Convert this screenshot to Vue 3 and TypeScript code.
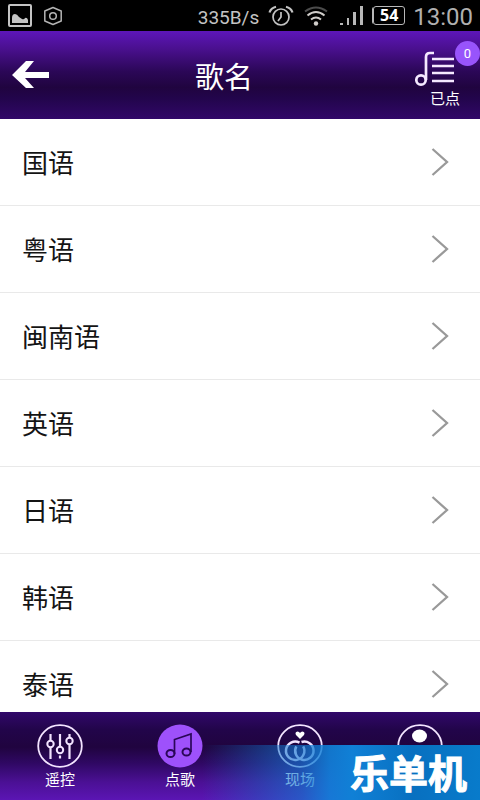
<script setup lang="ts">
import { ref } from 'vue'

interface Language {
  id: string
  name: string
}

const languages: Language[] = [
  { id: 'mandarin', name: '国语' },
  { id: 'cantonese', name: '粤语' },
  { id: 'hokkien', name: '闽南语' },
  { id: 'english', name: '英语' },
  { id: 'japanese', name: '日语' },
  { id: 'korean', name: '韩语' },
  { id: 'thai', name: '泰语' },
]

const queued = ref<number>(0)
</script>

<template>
  <div class="screen">
    <div class="status">
      <svg class="picture" width="24" height="24" viewBox="0 0 24 24">
        <rect x="1" y="1" width="22" height="21" rx="1" fill="none" stroke="#c4c4c4" stroke-width="2" />
        <path d="M4 19v-5q0-4 3-4 2 0 4 3l3 2q2 1 3-1 2-1 3 2v3z" fill="#c4c4c4" />
      </svg>
      <svg class="hexagon" width="20" height="20" viewBox="0 0 20 20" fill="none" stroke="#b4b4b4" stroke-width="1.500">
        <path d="M10 1.500L18.200 5v10L10 18.500 1.800 15V5z" stroke-linejoin="round" />
        <circle cx="10" cy="10" r="3.300" />
      </svg>
      <span class="speed">335B/s</span>
      <svg class="alarm" width="26" height="22" viewBox="0 0 26 22" fill="none" stroke="#c4c4c4" stroke-width="1.700">
        <circle cx="13" cy="12" r="8" />
        <path d="M13 7v5l-3 4" />
        <path d="M1.500 7.500Q3 3 8 1.800M24.500 7.500Q23 3 18 1.800" stroke-width="2.200" />
      </svg>
      <svg class="wifi" width="26" height="22" viewBox="0 0 26 22" fill="none" stroke="#d0cdca" stroke-width="2">
        <path d="M2 6.500Q13-1.500 24 6.500" stroke="#4c4c4c" />
        <path d="M4.500 10.500q8.500-7 17 0M8 14.500q5-4 10 0" />
        <circle cx="13" cy="18.500" r="2.200" fill="#d0cdca" stroke="none" />
      </svg>
      <svg class="signal" width="24" height="20" viewBox="0 0 24 20" fill="#b8b8b8">
        <path d="M0 17h3v2H0zM7 12h2v7H7zM13 6h3v13h-3zM20 0h3v19h-3z" />
      </svg>
      <span class="battery">54</span>
      <span class="clock">13:00</span>
    </div>

    <header class="header">
      <button class="back" type="button" aria-label="返回">
        <svg width="38" height="30" viewBox="0 0 38 30" fill="#fff">
          <path d="M0 15L14 1h8L13 12h24v6H13l9 10h-8z" />
        </svg>
      </button>
      <h1>歌名</h1>
      <button class="queue" type="button">
        <svg width="40" height="36" viewBox="0 0 40 36" fill="none" stroke="#f5e9ff">
          <circle cx="6" cy="29" r="4.700" stroke-width="2.700" />
          <path d="M11 29V6q0-4 4-4h4" stroke-width="2.700" />
          <path d="M17 8h22M17 15h22M17 22h22M17 30h22" stroke-width="2.300" />
        </svg>
        <span class="queue-label">已点</span>
        <span class="badge">{{ queued }}</span>
      </button>
    </header>

    <main class="list">
      <button v-for="item in languages" :key="item.id" class="row" type="button">
        <span>{{ item.name }}</span>
        <svg width="18" height="28" viewBox="0 0 18 28" fill="none" stroke="#999" stroke-width="2.300">
          <path d="M1.500 1L16 14 1.500 27" />
        </svg>
      </button>
    </main>

    <nav class="tabs">
      <button class="tab" type="button">
        <svg width="46" height="44" viewBox="0 0 46 44" fill="none" stroke="#f3e4ff" stroke-width="2">
          <ellipse cx="23" cy="22" rx="21.800" ry="20.800" stroke-width="1.800" />
          <path d="M13.500 10v6M13.500 23v12M23 10v12M23 31.500v3M32.500 10v3M32.500 21v14" stroke-width="2.200" />
          <circle cx="13.500" cy="20" r="3.200" />
          <circle cx="23" cy="26" r="3.200" />
          <circle cx="32.500" cy="17" r="3.200" />
        </svg>
        <span>遥控</span>
      </button>
      <button class="tab" type="button">
        <svg width="46" height="44" viewBox="0 0 46 44" fill="none" stroke="#2a0658">
          <ellipse cx="23" cy="22" rx="22.500" ry="21.500" fill="#9e51fb" stroke="none" />
          <ellipse cx="13.500" cy="29.500" rx="4" ry="3.600" stroke-width="2" />
          <ellipse cx="29.500" cy="28" rx="4" ry="3.600" stroke-width="2" />
          <path d="M17.500 30V15.500L34 10v18" stroke-width="1.700" />
        </svg>
        <span>点歌</span>
      </button>
      <button class="tab" type="button">
        <svg width="46" height="44" viewBox="0 0 46 44" fill="none" stroke="#f3e4ff">
          <ellipse cx="23" cy="22" rx="21.800" ry="20.800" stroke-width="1.800" />
          <path d="M23 15l-4-4q-1.500-3 1.500-3.500 1.800 0 2.500 1.500.7-1.500 2.500-1.500 3 .5 1.500 3.500z" fill="#fff" stroke="none" />
          <path d="M22.500 18.700A9.200 9.200 0 1 0 26.200 22.300M24.500 18a9.200 9.200 0 1 1-5.200 4.300" stroke-width="2.500" />
        </svg>
        <span>现场</span>
      </button>
      <button class="tab" type="button" aria-label="我的">
        <svg width="46" height="44" viewBox="0 0 46 44" fill="none" stroke="#f3e4ff">
          <ellipse cx="23" cy="22" rx="21.800" ry="20.800" stroke-width="1.800" />
          <ellipse cx="22.500" cy="12" rx="7.500" ry="6.500" fill="#fff" stroke="none" />
        </svg>
      </button>
      <div class="brand">乐单机</div>
    </nav>
  </div>
</template>

<style>
body {
  margin: 0;
}
</style>

<style scoped>
.screen {
  display: flex;
  flex-direction: column;
  height: 100vh;
  overflow: hidden;
  background: #fff;
  font-family: "Noto Sans CJK SC", sans-serif;
}
button {
  padding: 0;
  border: 0;
  background: none;
  color: inherit;
  font-family: inherit;
}
svg {
  display: block;
  flex: none;
}
.status {
  display: flex;
  flex: none;
  align-items: center;
  height: 31px;
  padding: 0 7px 0 8px;
  background: #000;
  color: #c4c4c4;
  font-family: Roboto, sans-serif;
}
.hexagon {
  margin-left: 11px;
}
.speed {
  margin-left: auto;
  padding-top: 4px;
  font-size: 19px;
}
.alarm,
.wifi {
  margin-left: 9px;
}
.signal {
  margin-left: 11px;
}
.battery {
  box-sizing: border-box;
  width: 32px;
  height: 19px;
  margin-left: 9px;
  border: 1px solid #b8b8b8;
  border-radius: 3px;
  box-shadow: -2px 0 0 -1px #b8b8b8;
  color: #fff;
  font: bold 16px/17px "Open Sans", sans-serif;
  text-align: center;
}
.clock {
  margin-left: 8px;
  padding-top: 2px;
  color: #b0b0b0;
  font-size: 24px;
}
.header {
  display: flex;
  flex: none;
  align-items: center;
  height: 88px;
  background: linear-gradient(#5d16b9, #4a108f 20%, #2b0757 46%, #20043f 64%, #22054b 76%, #310768);
  color: #fff;
}
.back {
  padding: 0 12px;
}
h1 {
  flex: 1;
  margin: 0;
  font-size: 29px;
  font-weight: 400;
  line-height: 40px;
  text-align: center;
}
.queue {
  position: relative;
  display: flex;
  box-sizing: border-box;
  flex-direction: column;
  align-items: flex-start;
  width: 94px;
  height: 68px;
  padding: 10px 0 0 29px;
}
.queue-label {
  margin-left: 15px;
  font-size: 15px;
  line-height: 22px;
}
.badge {
  position: absolute;
  top: 0;
  right: 0;
  width: 25px;
  height: 25px;
  border-radius: 50%;
  background: #9854fb;
  font: 13px/25px Roboto, sans-serif;
  text-align: center;
}
.list {
  flex: 1;
  min-height: 0;
  overflow: hidden;
}
.row {
  display: flex;
  box-sizing: border-box;
  align-items: center;
  justify-content: space-between;
  width: 100%;
  height: 87px;
  padding: 0 31px 0 22px;
  border-bottom: 1px solid #e9e9e9;
  color: #141414;
  font-size: 26px;
  line-height: 38px;
}
.tabs {
  position: relative;
  display: grid;
  flex: none;
  grid-template-columns: repeat(4, 1fr);
  height: 88px;
  background: linear-gradient(#31086a, #22054a 20%, #20043f 40%, #2f0863 58%, #4b1095 80%, #5b15b4);
  color: #fff;
}
.tab {
  display: flex;
  flex-direction: column;
  align-items: center;
  padding-top: 12px;
  font-size: 15px;
  line-height: 22px;
}
.brand {
  position: absolute;
  right: 0;
  bottom: 0;
  left: 42%;
  height: 55px;
  padding-right: 13px;
  background: linear-gradient(90deg, rgba(16, 110, 200, 0), rgba(16, 112, 200, .4) 20%, rgba(16, 122, 210, .65) 36%, rgba(16, 130, 218, .9) 46%, #1080d6 54%, #0870c0 76%, #087bcb);
  font-size: 39px;
  font-weight: 700;
  line-height: 53px;
  text-align: right;
  -webkit-text-stroke: 1px #fff;
}
</style>
